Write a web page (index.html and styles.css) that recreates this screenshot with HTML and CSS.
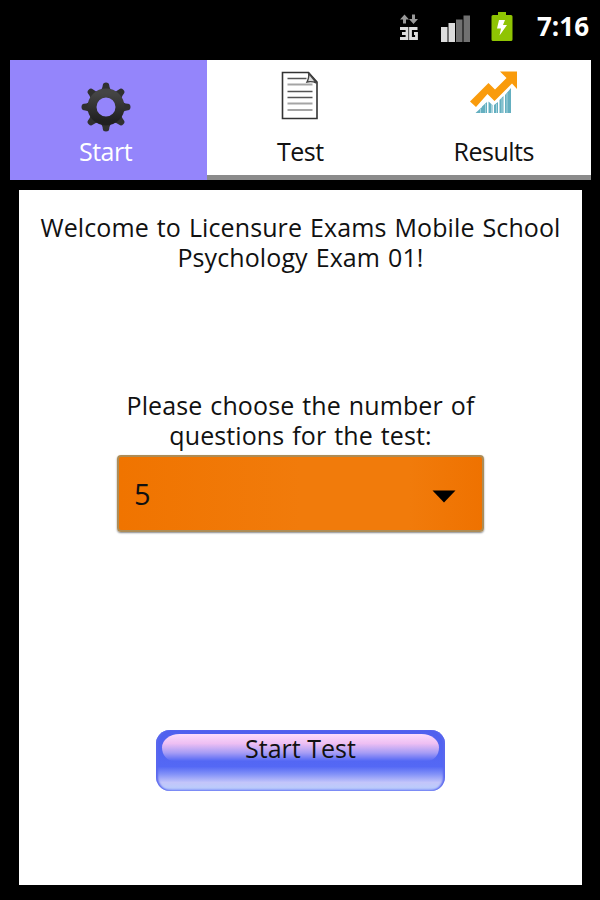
FILE: index.html
```html
<!DOCTYPE html>
<html lang="en">
<head>
    <meta charset="utf-8">
    <title>Licensure Exams Mobile</title>
    <link rel="stylesheet" href="styles.css">
</head>
<body>
<div class="statusbar">
    <svg class="net" width="20" height="28" viewBox="0 0 20 28">
        <path d="M1 6.500L5.500 1.500l4.500 5H7v4H4v-4z" fill="#999"/>
        <path d="M10 6l4.500 5 4.500-5h-3V1.500h-3V6z" fill="#999"/>
        <path d="M1 15.500h7v10H1M3 20.500h5M18.500 15.500h-7v10h6v-5H15" fill="none" stroke="#ddd" stroke-width="2.800"/>
    </svg>
    <svg class="signal" width="30" height="27" viewBox="0 0 30 27">
        <path d="M0 12h6.500v15H0zM7.500 8H14v19H7.500z" fill="#dcdcdc"/>
        <path d="M15 4.500h6.500V27H15zM22.500 0.500H29V27h-6.500z" fill="#717171"/>
    </svg>
    <svg class="battery" width="22" height="31" viewBox="0 0 22 31">
        <path d="M7 1h8v3h5q1.500 0 1.500 1.500v23q0 1.500-1.500 1.500H2Q.5 30 .5 28.500v-23Q.5 4 2 4h5z" fill="#8fc403"/>
        <path d="M8 9h6l-2 5h4L8.500 24.500l1.500-7H6z" fill="#fff"/>
    </svg>
    <span class="clock">7:16</span>
</div>

<div class="tabs">
    <div class="tab selected">
        <svg class="gear" width="50" height="50" viewBox="-25 -25 50 50">
            <defs>
                <linearGradient id="metal" x1="0" y1="0" x2="0" y2="1">
                    <stop offset="0" stop-color="#454545"/>
                    <stop offset="1" stop-color="#202020"/>
                </linearGradient>
                <path id="tooth" d="M-8-14Q-3.500-17-3.200-22-3-24.500 0-24.500T3.200-22Q3.500-17 8-14z"/>
            </defs>
            <g fill="#303030">
                <use href="#tooth"/>
                <use href="#tooth" transform="rotate(45)"/>
                <use href="#tooth" transform="rotate(90)"/>
                <use href="#tooth" transform="rotate(135)"/>
                <use href="#tooth" transform="rotate(180)"/>
                <use href="#tooth" transform="rotate(225)"/>
                <use href="#tooth" transform="rotate(270)"/>
                <use href="#tooth" transform="rotate(315)"/>
            </g>
            <circle r="14" fill="none" stroke="url(#metal)" stroke-width="9"/>
        </svg>
        <span>Start</span>
    </div>
    <div class="tab test">
        <svg class="page" width="38" height="49" viewBox="0 0 38 49">
            <path d="M1.500 1.500h26L36 11v36.500H1.500z" fill="#fff" stroke="#333" stroke-width="1.600"/>
            <path d="M6.500 7.500h19M6.500 20.500h25M6.500 26.500h25" stroke="#555" stroke-width="1.500"/>
            <path d="M6.500 13.500h25M6.500 32.500h25M6.500 39h25" stroke="#a5a5a5" stroke-width="1.800"/>
            <path d="M27.500 2q1 4-1.500 9 5-1 9.500 1z" fill="#ddd" stroke="#444" stroke-width="1.400"/>
        </svg>
        <span>Test</span>
    </div>
    <div class="tab results">
        <svg class="chart" width="48" height="43" viewBox="0 0 48 43">
            <path d="M5.500 42L12 36v6zM12 35.500L17 31v11h-5zM18.500 30.500l4 3.500v8h-4zM24 34l4-3v11h-4zM29.500 29l4-4v17h-4zM35 24l6-7v25h-6z" fill="#64afc0"/>
            <path d="M10.500 38v4M15.500 33v9M21.500 33v9M26.500 33v9M32 27v15M37 22v20" stroke="#a5d2dc"/>
            <path d="M0 30.500L18.500 12l6.500 6.500L36.500 7 30 .5h17V18l-5-5.500L24.500 30l-7-7L6 36z" fill="#f99b0c"/>
        </svg>
        <span>Results</span>
    </div>
</div>

<div class="content">
    <p class="welcome">Welcome to Licensure Exams Mobile School<br>Psychology Exam 01!</p>
    <p class="choose">Please choose the number of<br>questions for the test:</p>
    <div class="spinner">
        <span>5</span>
        <svg width="24" height="13" viewBox="0 0 24 13"><path d="M.5.5h23L12 12.500z"/></svg>
    </div>
    <div class="start"><span>Start Test</span></div>
</div>
</body>
</html>
```
FILE: styles.css
```css
body {
    margin: 0;
    height: 900px;
    overflow: hidden;
    background: #000;
    color: #111;
    font: 25px/30px "Open Sans", "Noto Sans", sans-serif;
}

svg {
    display: block;
    flex: none;
}

.statusbar {
    display: flex;
    height: 60px;
    box-sizing: border-box;
    padding: 11px 11px 0 0;
    justify-content: flex-end;
}

.net {
    margin: 2px 22px 0 0;
}

.signal {
    margin: 4px 20px 0 0;
}

.battery {
    margin-right: 24px;
}

.clock {
    width: 52px;
    color: #fff;
    font-size: 26px;
    font-weight: bold;
    text-align: right;
}

.tabs {
    display: flex;
    height: 120px;
    margin: 0 9px 0 10px;
    letter-spacing: -.5px;
}

.tab {
    display: flex;
    flex-direction: column;
    align-items: center;
    justify-content: space-between;
    flex: 1;
    box-sizing: border-box;
    padding: 11px 0 9px;
    background: #fff;
    border-bottom: 5px solid #8b8b8b;
}

.tab.selected {
    flex: none;
    width: 197px;
    background: #9485fb;
    color: #fff;
    border: 0;
    padding: 22px 6px 14px 0;
}

.tab.test {
    padding-right: 7px;
}

.tab.results {
    padding-right: 4px;
}

.content {
    display: flex;
    flex-direction: column;
    align-items: center;
    height: 695px;
    margin: 10px 18px 0 19px;
    box-sizing: border-box;
    padding-top: 22px;
    background: #fff;
    text-align: center;
    white-space: nowrap;
}

p {
    margin: 0;
    letter-spacing: .1px;
    word-spacing: 1.4px;
}

.choose {
    margin-top: 118px;
}

.spinner {
    display: flex;
    align-items: center;
    justify-content: space-between;
    width: 367px;
    height: 77px;
    margin-top: 5px;
    box-sizing: border-box;
    padding: 0 26px 0 15px;
    background: linear-gradient(90deg, #f07400, #f17b0b 50%, #f17b0b 80%, #ef7200);
    border: 2px solid #ad8c56;
    border-radius: 4px;
    box-shadow: 0 1px 2px #888;
    font-size: 29px;
}

.spinner svg {
    margin-top: 5px;
}

/* the gloss is the ::before, laid over the body of the button */
.start {
    position: relative;
    width: 289px;
    height: 61px;
    margin-top: 198px;
    box-sizing: border-box;
    padding-top: 3px;
    border-radius: 14px;
    background: linear-gradient(#5060ee, #5468f5 60%, #8190f8 72%, #c3c5fa 86%, #bccbfb 94%, #96a8fa);
    box-shadow: inset 2px 0 2px #5a68ee, inset -2px 0 2px #5a68ee;
}

.start::before {
    content: "";
    position: absolute;
    top: 4px;
    left: 6px;
    right: 6px;
    height: 27px;
    border-radius: 18px 18px 12px 12px / 14px;
    background: linear-gradient(#fbdcfb, #eebff3 35%, #a59cf5 70%, #5468f5);
}

.start span {
    position: relative;
}
```
